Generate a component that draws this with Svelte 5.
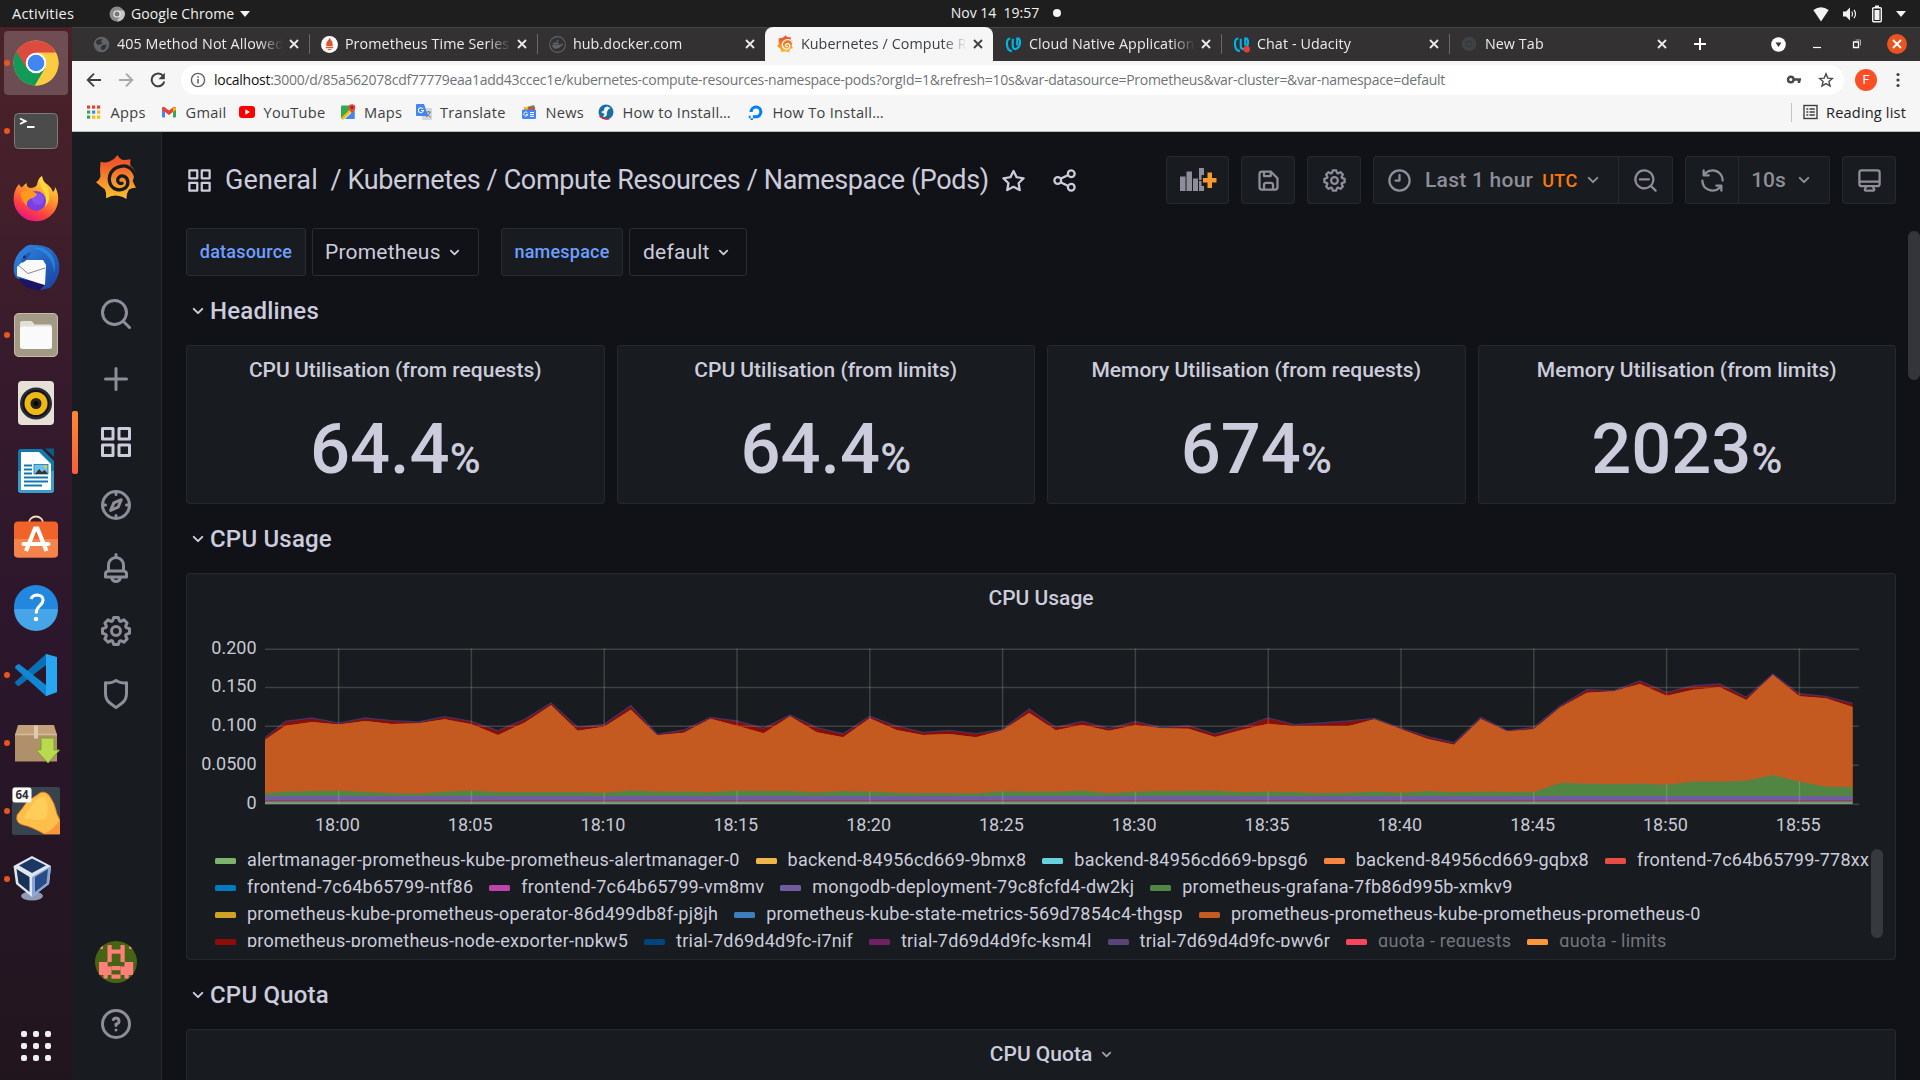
<script>
  const icons = {
    apps: 'M10,13H3a1,1,0,0,0-1,1v7a1,1,0,0,0,1,1h7a1,1,0,0,0,1-1V14A1,1,0,0,0,10,13ZM9,20H4V15H9ZM21,2H14a1,1,0,0,0-1,1v7a1,1,0,0,0,1,1h7a1,1,0,0,0,1-1V3A1,1,0,0,0,21,2ZM20,9H15V4h5Zm1,4H14a1,1,0,0,0-1,1v7a1,1,0,0,0,1,1h7a1,1,0,0,0,1-1V14A1,1,0,0,0,21,13Zm-1,7H15V15h5ZM10,2H3A1,1,0,0,0,2,3v7a1,1,0,0,0,1,1h7a1,1,0,0,0,1-1V3A1,1,0,0,0,10,2ZM9,9H4V4H9Z',
    search: 'M21.71,20.29,18,16.61A9,9,0,1,0,16.61,18l3.68,3.68a1,1,0,0,0,1.42,0A1,1,0,0,0,21.71,20.29ZM11,18a7,7,0,1,1,7-7A7,7,0,0,1,11,18Z',
    zoomOut: 'M21.71,20.29,18,16.61A9,9,0,1,0,16.61,18l3.68,3.68a1,1,0,0,0,1.42,0A1,1,0,0,0,21.71,20.29ZM11,18a7,7,0,1,1,7-7A7,7,0,0,1,11,18ZM15,10H7a1,1,0,0,0,0,2h8a1,1,0,0,0,0-2Z',
    plus: 'M19,11H13V5a1,1,0,0,0-2,0v6H5a1,1,0,0,0,0,2h6v6a1,1,0,0,0,2,0V13h6a1,1,0,0,0,0-2Z',
    compass: 'M12,2A10,10,0,1,0,22,12,10,10,0,0,0,12,2Zm1,17.93V19a1,1,0,0,0-2,0v.93A8,8,0,0,1,4.07,13H5a1,1,0,0,0,0-2H4.07A8,8,0,0,1,11,4.07V5a1,1,0,0,0,2,0V4.07A8,8,0,0,1,19.93,11H19a1,1,0,0,0,0,2h.93A8,8,0,0,1,13,19.93ZM15.14,7.55l-5,2.12a1,1,0,0,0-.52.52l-2.12,5a1,1,0,0,0,.21,1.1,1,1,0,0,0,.7.3.93.93,0,0,0,.4-.09l5-2.12a1,1,0,0,0,.52-.52l2.12-5a1,1,0,0,0-1.31-1.31Zm-2.49,5.1-2.28,1,1-2.28,2.28-1Z',
    bell: 'M18,13.18V10a6,6,0,0,0-5-5.91V3a1,1,0,0,0-2,0V4.09A6,6,0,0,0,6,10v3.18A3,3,0,0,0,4,16v2a1,1,0,0,0,1,1H8.14a4,4,0,0,0,7.72,0H19a1,1,0,0,0,1-1V16A3,3,0,0,0,18,13.18ZM8,10a4,4,0,0,1,8,0v3H8Zm4,10a2,2,0,0,1-1.72-1h3.44A2,2,0,0,1,12,20Zm6-3H6V16a1,1,0,0,1,1-1H17a1,1,0,0,1,1,1Z',
    cog: 'M21.32,9.55l-1.89-.63.89-1.78A1,1,0,0,0,20.13,6L18,3.87a1,1,0,0,0-1.15-.19l-1.78.89-.63-1.89A1,1,0,0,0,13.5,2h-3a1,1,0,0,0-.95.68L8.92,4.57,7.14,3.68A1,1,0,0,0,6,3.87L3.87,6a1,1,0,0,0-.19,1.15l.89,1.78-1.89.63A1,1,0,0,0,2,10.5v3a1,1,0,0,0,.68.95l1.89.63-.89,1.78A1,1,0,0,0,3.87,18L6,20.13a1,1,0,0,0,1.15.19l1.78-.89.63,1.89a1,1,0,0,0,.95.68h3a1,1,0,0,0,.95-.68l.63-1.89,1.78.89A1,1,0,0,0,18,20.13L20.13,18a1,1,0,0,0,.19-1.15l-.89-1.78,1.89-.63A1,1,0,0,0,22,13.5v-3A1,1,0,0,0,21.32,9.55ZM20,12.78l-1.2.4A2,2,0,0,0,17.64,16l.57,1.14-1.1,1.1L16,17.64a2,2,0,0,0-2.79,1.16l-.4,1.2H11.22l-.4-1.2A2,2,0,0,0,8,17.64l-1.14.57-1.1-1.1L6.36,16A2,2,0,0,0,5.2,13.18L4,12.78V11.22l1.2-.4A2,2,0,0,0,6.36,8L5.79,6.89l1.1-1.1L8,6.36A2,2,0,0,0,10.82,5.2l.4-1.2h1.56l.4,1.2A2,2,0,0,0,16,6.36l1.14-.57,1.1,1.1L17.64,8a2,2,0,0,0,1.16,2.79l1.2.4ZM12,8a4,4,0,1,0,4,4A4,4,0,0,0,12,8Zm0,6a2,2,0,1,1,2-2A2,2,0,0,1,12,14Z',
    shield: 'M19.63,3.65a1,1,0,0,0-.84-.2,8,8,0,0,1-6.22-1.27,1,1,0,0,0-1.14,0A8,8,0,0,1,5.21,3.45a1,1,0,0,0-.84.2A1,1,0,0,0,4,4.43v7.45a9,9,0,0,0,3.77,7.33l3.65,2.6a1,1,0,0,0,1.16,0l3.65-2.6A9,9,0,0,0,20,11.88V4.43A1,1,0,0,0,19.63,3.65ZM18,11.88a7,7,0,0,1-2.93,5.7L12,19.77,8.93,17.58A7,7,0,0,1,6,11.88V5.58a10,10,0,0,0,6-1.39,10,10,0,0,0,6,1.39Z',
    star: 'M22,9.67A1,1,0,0,0,21.14,9l-5.69-.83L12.9,3a1,1,0,0,0-1.8,0L8.55,8.16,2.86,9a1,1,0,0,0-.81.68,1,1,0,0,0,.25,1l4.13,4-1,5.68A1,1,0,0,0,6.9,21.44L12,18.77l5.1,2.67a.93.93,0,0,0,.46.12,1,1,0,0,0,.59-.19,1,1,0,0,0,.4-1l-1-5.68,4.13-4A1,1,0,0,0,22,9.67Zm-6.15,4a1,1,0,0,0-.29.88l.72,4.2-3.76-2a1.06,1.06,0,0,0-.94,0l-3.76,2,.72-4.2a1,1,0,0,0-.29-.88l-3-3,4.21-.61a1,1,0,0,0,.76-.55L12,5.7l1.88,3.82a1,1,0,0,0,.76.55l4.21.61Z',
    share: 'M18,14a4,4,0,0,0-3.08,1.48l-5.1-2.35a3.64,3.64,0,0,0,0-2.26l5.1-2.35A4,4,0,1,0,14,6a4.17,4.17,0,0,0,.07.71L8.79,9.14a4,4,0,1,0,0,5.72l5.28,2.43A4.17,4.17,0,0,0,14,18a4,4,0,1,0,4-4ZM18,4a2,2,0,1,1-2,2A2,2,0,0,1,18,4ZM6,14a2,2,0,1,1,2-2A2,2,0,0,1,6,14Zm12,6a2,2,0,1,1,2-2A2,2,0,0,1,18,20Z',
    save: 'M20.71,9.29l-6-6a1,1,0,0,0-.32-.21A1.09,1.09,0,0,0,14,3H6A3,3,0,0,0,3,6V18a3,3,0,0,0,3,3H18a3,3,0,0,0,3-3V10A1,1,0,0,0,20.71,9.29ZM9,5h4V7H9Zm6,14H9V16a1,1,0,0,1,1-1h4a1,1,0,0,1,1,1Zm4-1a1,1,0,0,1-1,1H17V16a3,3,0,0,0-3-3H10a3,3,0,0,0-3,3v3H6a1,1,0,0,1-1-1V6A1,1,0,0,1,6,5H7V8A1,1,0,0,0,8,9h6a1,1,0,0,0,1-1V6.41l4,4Z',
    clock: 'M12,2A10,10,0,1,0,22,12,10,10,0,0,0,12,2Zm0,18a8,8,0,1,1,8-8A8,8,0,0,1,12,20ZM12,6a1,1,0,0,0-1,1v4H8.5a1,1,0,0,0,0,2H12a1,1,0,0,0,1-1V7A1,1,0,0,0,12,6Z',
    sync: 'M19.91,15.51H15.38a1,1,0,0,0,0,2h2.4A8,8,0,0,1,4,12a1,1,0,1,0-2,0,10,10,0,0,0,16.88,7.23V21a1,1,0,0,0,2,0V16.5A1,1,0,0,0,19.91,15.51ZM12,2A10,10,0,0,0,5.12,4.77V3a1,1,0,0,0-2,0V7.5a1,1,0,0,0,1,1h4.5a1,1,0,0,0,0-2H6.22A8,8,0,0,1,20,12a1,1,0,0,0,2,0A10,10,0,0,0,12,2Z',
    monitor: 'M19,2H5A3,3,0,0,0,2,5V15a3,3,0,0,0,3,3H7.64l-.58,1a2,2,0,0,0,0,2,2,2,0,0,0,1.75,1h6.46A2,2,0,0,0,17,21a2,2,0,0,0,0-2l-.59-1H19a3,3,0,0,0,3-3V5A3,3,0,0,0,19,2ZM8.77,20,10,18H14l1.2,2ZM20,15a1,1,0,0,1-1,1H5a1,1,0,0,1-1-1V14H20Zm0-3H4V5A1,1,0,0,1,5,4H19a1,1,0,0,1,1,1Z',
    angle: 'M17,9.17a1,1,0,0,0-1.41,0L12,12.71,8.46,9.17a1,1,0,0,0-1.41,0,1,1,0,0,0,0,1.42l4.24,4.24a1,1,0,0,0,1.42,0L17,10.59A1,1,0,0,0,17,9.17Z',
    question: 'M11.29,15.29a1.58,1.58,0,0,0-.12.15.76.76,0,0,0-.09.18.64.64,0,0,0-.06.18,1.36,1.36,0,0,0,0,.2.84.84,0,0,0,.08.38.9.9,0,0,0,.54.54.94.94,0,0,0,.76,0,.9.9,0,0,0,.54-.54A1,1,0,0,0,13,16a1,1,0,0,0-.29-.71A1,1,0,0,0,11.29,15.29ZM12,2A10,10,0,1,0,22,12,10,10,0,0,0,12,2Zm0,18a8,8,0,1,1,8-8A8,8,0,0,1,12,20ZM12,7A3,3,0,0,0,9.4,8.5a1,1,0,1,0,1.73,1A1,1,0,0,1,12,9a1,1,0,0,1,0,2,1,1,0,0,0-1,1v1a1,1,0,0,0,2,0v-.18A3,3,0,0,0,12,7Z'
  };

  const dock = [
    { id: 'chrome', dot: true, active: true },
    { id: 'terminal', dot: true },
    { id: 'firefox' },
    { id: 'thunderbird' },
    { id: 'files', dot: true },
    { id: 'rhythmbox' },
    { id: 'writer' },
    { id: 'software' },
    { id: 'help' },
    { id: 'vscode', dot: true },
    { id: 'package', dot: true },
    { id: 'honey', dot: true },
    { id: 'vbox', dot: true }
  ];

  const tabs = [
    { title: '405 Method Not Allowed', icon: 'globe' },
    { title: 'Prometheus Time Series C', icon: 'prom', sep: true },
    { title: 'hub.docker.com', icon: 'docker', sep: true },
    { title: 'Kubernetes / Compute Re', icon: 'grafana', active: true },
    { title: 'Cloud Native Application', icon: 'udacity' },
    { title: 'Chat - Udacity', icon: 'udacityDot', sep: true },
    { title: 'New Tab', icon: 'chromeDim', sep: true }
  ];

  const bookmarks = [
    ['appsGrid', 'Apps'],
    ['gmail', 'Gmail'],
    ['youtube', 'YouTube'],
    ['maps', 'Maps'],
    ['translate', 'Translate'],
    ['news', 'News'],
    ['howto', 'How to Install…'],
    ['ocean', 'How To Install…']
  ];

  const nav = ['plus', 'apps', 'compass', 'bell', 'cog', 'shield'];

  const stats = [
    ['CPU Utilisation (from requests)', '64.4'],
    ['CPU Utilisation (from limits)', '64.4'],
    ['Memory Utilisation (from requests)', '674'],
    ['Memory Utilisation (from limits)', '2023']
  ];

  // Chart samples: [minute relative to 18:00, total, without node exporter, grafana layer]
  const samples = [
    [-2.77, 738.7, 740.7, 794], [-2, 722.3, 726.7, 792.6], [-1, 719, 723, 792], [0, 724.2, 725.5, 791.6], [1, 719, 722, 792.8],
    [2, 721.7, 725, 794], [3, 723, 724.3, 794.4], [4, 717.7, 720.3, 792.6], [5, 722.3, 725.3, 791.6], [6, 731.7, 736, 792.8],
    [7, 720.3, 723.7, 793], [8, 704, 706.3, 793], [9, 728.3, 731.7, 793], [10, 725.3, 727.7, 793.4], [11, 706.7, 710.7, 791.6],
    [12, 735.3, 736.3, 792.4], [13, 731, 733.7, 792.4], [14, 718.3, 719.7, 793], [15, 722, 726.7, 791.6], [16, 729.3, 734.3, 792],
    [17, 716, 717.3, 792], [18, 728.7, 733.3, 793.2], [19, 734.7, 738.3, 792], [20, 717.3, 719.3, 792.4], [21, 727, 731, 793.6],
    [22, 733.3, 736, 794], [23, 731.3, 735, 794], [24, 734.7, 738.3, 794.2], [25, 730.3, 731.3, 792], [26, 710, 714, 792.4],
    [27, 728.3, 731.3, 792.4], [28, 722.3, 726, 791.6], [29, 729.7, 731.7, 794], [30, 722.3, 726.3, 792.4], [31, 728.7, 729.3, 791.8],
    [32, 726.7, 729.7, 791.8], [33, 735, 738, 791.6], [34, 728, 731, 793], [35, 719, 724.7, 792.6], [36, 725.7, 727.3, 793],
    [37, 724, 727, 794], [38, 722, 727.3, 793.4], [39, 719.3, 720.3, 792.6], [40, 729, 730.3, 793.4], [41, 737.7, 740, 792],
    [42, 743.7, 745.7, 793], [43, 718.3, 720, 792.6], [44, 731.7, 732.3, 792.8], [45, 728.3, 730.3, 792.8], [46, 706.7, 708.3, 783.8],
    [47, 690.7, 693.7, 784.4], [48, 691.7, 692.3, 785], [49, 682, 685, 784.6], [50, 693.3, 696.7, 785.6], [51, 686.7, 690.7, 782.4],
    [52, 685, 688.3, 782.4], [53, 698.3, 701, 781.4], [54, 675, 675.7, 776], [55, 694.7, 697.3, 782.4], [56, 697.3, 699.3, 787.6],
    [57, 704.3, 708, 788]
  ];
  const X0 = 151.6;
  const STEP = 26.56;
  const TOP = 631;
  const px = (m) => X0 + m * STEP;
  const line = (i) => samples.map((s) => `${px(s[0]).toFixed(1)},${(s[i] - TOP).toFixed(1)}`).join(' ');
  const area = (i) => `${px(-2.77)},173.6 ${line(i)} ${px(57)},173.6`;
  const yTicks = [['0.200', 19], ['0.150', 57.3], ['0.100', 96], ['0.0500', 135], ['0', 174]];
  const xTicks = Array.from({ length: 12 }, (_, i) => [i * 5, `18:${String(i * 5).padStart(2, '0')}`]);

  const legend = [
    [
      ['#7EB26D', 'alertmanager-prometheus-kube-prometheus-alertmanager-0'],
      ['#EEB648', 'backend-84956cd669-9bmx8'],
      ['#66D2E0', 'backend-84956cd669-bpsg6'],
      ['#F88542', 'backend-84956cd669-gqbx8'],
      ['#E84D45', 'frontend-7c64b65799-778xx']
    ],
    [
      ['#007BC2', 'frontend-7c64b65799-ntf86'],
      ['#BF43A9', 'frontend-7c64b65799-vm8mv'],
      ['#705DA0', 'mongodb-deployment-79c8fcfd4-dw2kj'],
      ['#508642', 'prometheus-grafana-7fb86d995b-xmkv9']
    ],
    [
      ['#D0A224', 'prometheus-kube-prometheus-operator-86d499db8f-pj8jh'],
      ['#3D7FBC', 'prometheus-kube-state-metrics-569d7854c4-thgsp'],
      ['#C65A20', 'prometheus-prometheus-kube-prometheus-prometheus-0']
    ],
    [
      ['#8F0D08', 'prometheus-prometheus-node-exporter-npkw5'],
      ['#00447C', 'trial-7d69d4d9fc-j7njf'],
      ['#6F2162', 'trial-7d69d4d9fc-ksm4l'],
      ['#584477', 'trial-7d69d4d9fc-pwv6r'],
      ['#FA455C', 'quota - requests', true],
      ['#FF963A', 'quota - limits', true]
    ]
  ];

  // Blocks of the avatar identicon: [x, y, width, height]
  const avatarRects = [
    [4, 4, 4, 4], [34, 4, 4, 4], [12.5, 4, 4.2, 17], [25.5, 4, 4.2, 17], [16, 8.5, 10, 4.2],
    [4, 21, 8.7, 13], [29.5, 21, 8.7, 13], [12, 25.5, 4.5, 8.5], [25.5, 25.5, 4.5, 8.5],
    [16.5, 25, 9, 4.2], [8.5, 33, 4.2, 4.5], [29.5, 33, 4.2, 4.5], [16.5, 33.5, 9, 4.2]
  ];
</script>

{#snippet icon(name, size)}
  <svg class="ic" width={size} height={size} viewBox="0 0 24 24"><path d={icons[name]} fill="currentColor" /></svg>
{/snippet}

{#snippet cross()}
  <svg class="cross" width="10" height="10" viewBox="0 0 10 10"><path d="M1 1l8 8M9 1l-8 8" stroke="currentColor" stroke-width="1.8" /></svg>
{/snippet}

{#snippet grafanaMark(w, h, hole)}
  <svg class="ic" width={w} height={h} viewBox="0 0 40 44">
    <defs>
      <linearGradient id="gf" x1="0" y1="1" x2="0" y2="0">
        <stop offset="0" stop-color="#fcc22d" /><stop offset=".45" stop-color="#f68b2c" /><stop offset=".8" stop-color="#f15a29" /><stop offset="1" stop-color="#f0512a" />
      </linearGradient>
    </defs>
    <path
      fill="url(#gf)"
      d="M21.5 0Q23 3 26 4.8Q30 5.2 34.6 4.2Q33.8 7.5 34.4 10.5C37.5 13 39.8 16.5 39.9 20.7L38 21.4Q37.6 24 36.6 25.8Q38 29.5 40 32.8Q36.5 32.5 33 34.5Q30.5 38 30.4 44Q27 41.5 23 41Q16.5 39.5 10.2 43.2Q10.8 38 8.8 34.3Q5 31.5 0 27.2Q3.5 25 4.5 21.5Q3.5 14 4.6 6.8Q9 8.5 13.5 6.5Q18.5 4.5 21.5 0Z"
    />
    <path
      d="M39.6 21.8C37.5 13.5 31 9.6 24.6 11.3C15 13 11.7 21.5 14 28.2C16.3 34.5 23.8 36.8 29 33.2C33.3 29.8 32.5 23 28 21.3C24.5 20 20.8 22.8 21.9 26.3C22.6 28.2 24.3 28.9 26 28.2"
      fill="none" stroke={hole} stroke-width="3.3" stroke-linecap="round"
    />
  </svg>
{/snippet}

{#snippet chromeMark(size)}
  <svg class="ic" width={size} height={size} viewBox="0 0 46 46">
    <circle cx="23" cy="23" r="22.5" fill="#fdc93a" />
    <path d="M23 23L3.5 11.8A22.5 22.5 0 0 0 22 45.5L32.5 28Z" fill="#119b57" />
    <path d="M3.5 11.8A22.5 22.5 0 0 1 42.8 12.7H23L13.5 28Z" fill="#dd4b3e" />
    <path d="M23 12.7h20A22.5 22.5 0 0 1 22 45.5L32 28.5Z" fill="#fdcb40" />
    <circle cx="23" cy="23" r="10.3" fill="#fff" /><circle cx="23" cy="23" r="8.3" fill="#4285f4" />
  </svg>
{/snippet}

{#snippet favicon(name)}
  {#if name === 'grafana'}
    {@render grafanaMark(16, 18, '#f6f6f6')}
  {:else if name === 'chromeDim'}
    <svg class="ic" width="16" height="16" viewBox="0 0 16 16"><circle cx="8" cy="8" r="5.2" fill="none" stroke="#3f4346" stroke-width="4" /><circle cx="8" cy="8" r="2.6" fill="#3f4346" /></svg>
  {:else}
    <svg class="ic" width="17" height="17" viewBox="0 0 16 16">
      {#if name === 'globe'}
        <circle cx="8" cy="8" r="7.3" fill="#5f6368" />
        <path d="M3 4.5Q6 2 9 3L7.5 5.5L9 7L5 8.5L3 7ZM9 8.5L13 8L11.5 12L8.5 13.5L7 11Z" fill="#333132" />
      {:else if name === 'prom'}
        <circle cx="8" cy="8" r="8" fill="#fff" />
        <path d="M8 1.5C9 4 11.5 5 11 9.3H5C4.5 5 7 5 8 1.5ZM4.5 10.2h7v1.3h-7ZM6 12.3h4Q8 14.5 6 12.3Z" fill="#e6522c" />
      {:else if name === 'docker'}
        <circle cx="8" cy="8" r="7.4" fill="none" stroke="#5f6368" stroke-width="1" />
        <path d="M3 8h8.5Q12 6.5 13.5 7.3Q13 9 11.5 9.2Q10 12 6.5 12Q3 12 3 8ZM4 6h5v1.5h-5ZM7 4h2v1.5h-2Z" fill="#5f6368" />
      {:else}
        <path d="M5 2.3Q1.8 2.3 1.8 7Q1.8 13.8 6.5 14.2M7.3 2.5V10Q7.5 12.5 10 12.3Q14 11 14.2 6Q14.3 2 11.5 2.3V9" fill="none" stroke="#02b3e4" stroke-width="2" />
        {#if name === 'udacityDot'}<circle cx="13" cy="12.5" r="3" fill="#e0403a" />{/if}
      {/if}
    </svg>
  {/if}
{/snippet}

{#snippet bookmarkIcon(name)}
  <svg class="ic" width="16" height="16" viewBox="0 0 16 16">
    {#if name === 'appsGrid'}
      {#each [['#ea4335', '#ea4335', '#ea4335'], ['#34a853', '#4285f4', '#fbbc05'], ['#34a853', '#fbbc05', '#fbbc05']] as row, r}
        {#each row as c, k}<rect x={1 + k * 5} y={1.5 + r * 5} width="3.2" height="3.2" fill={c} />{/each}
      {/each}
    {:else if name === 'gmail'}
      <path d="M1 3.5h3v10H2q-1 0-1-1Z" fill="#4285f4" /><path d="M12 3.5h3v9q0 1-1 1h-2Z" fill="#34a853" />
      <path d="M1 3.5l2-.8L8 6.5l5-3.8l2 .8v2.3L8 11L1 5.8Z" fill="#ea4335" /><path d="M12 3.5l3 0v2.3l-3 2.2Z" fill="#fbbc04" />
    {:else if name === 'youtube'}
      <rect x="0" y="2" width="16" height="12" rx="3" fill="#f00" /><path d="M6.3 5.3v5.4L11 8Z" fill="#fff" />
    {:else if name === 'maps'}
      <rect x="1" y="1.5" width="13.5" height="13.5" rx="1" fill="#34a853" /><path d="M1 15L14 2v12q0 1-1 1Z" fill="#e8eaed" /><path d="M5 15L14.5 6v9Z" fill="#4285f4" /><path d="M2 15L13 4" stroke="#fbbc04" stroke-width="2.5" />
      <path d="M12 10C11.5 7 8.7 6.5 8.7 3.5A3.3 3.3 0 0 1 15.3 3.5C15.3 6.5 12.5 7 12 10Z" fill="#ea4335" /><circle cx="12" cy="3.5" r="1.2" fill="#8c1d13" />
    {:else if name === 'translate'}
      <rect x="6" y="4" width="10" height="12" rx="1" fill="#d4d7db" /><path d="M0 1q0-1 1-1h7l4 12H1q-1 0-1-1Z" fill="#4285f4" />
      <path d="M7 4.8A2.5 2.5 0 1 0 7.4 6.5H5" fill="none" stroke="#fff" stroke-width="1.1" /><path d="M10 8h5M12.5 7v1M14 8q-1 4-4 5M11 9.5q1 2.5 4 4" fill="none" stroke="#607d8b" stroke-width=".9" />
    {:else if name === 'news'}
      <path d="M2 4l11-3l1 4Z" fill="#34a853" /><path d="M3 3h10v4H3Z" fill="#fbbc04" /><path d="M7 3l7 0v3H7Z" fill="#ea4335" /><rect x="1" y="5.5" width="14" height="9.5" rx="1.2" fill="#4285f4" />
      <path d="M6.5 8.8A2 2 0 1 0 6.8 10.5H5M9 8.5h4M9 10.4h4M9 12.3h4" fill="none" stroke="#fff" stroke-width="1" />
    {:else if name === 'howto'}
      <circle cx="8" cy="8" r="7.5" fill="#1b6f9f" /><path d="M9.5 2.5Q5.5 3 6 6.5L3 8L6.5 10L5 13Q8 13.5 9 10.5Q8 6.5 12.5 4Z" fill="#eef4f7" /><path d="M1.5 12.2Q6 16 11 14.8" stroke="#d22" stroke-width="1.3" fill="none" />
    {:else}
      <path d="M8 14.3V11.2A3.3 3.3 0 1 0 4.7 8H1.6A6.4 6.4 0 1 1 8 14.3Z" fill="#0080ff" /><path d="M4.9 11.2H8v3.1H4.9ZM2.6 14.3h2.3v1.7H2.6ZM.8 11.8h1.8v2.5H.8Z" fill="#0080ff" />
    {/if}
  </svg>
{/snippet}

{#snippet dockIcon(id)}
  {#if id === 'chrome'}
    {@render chromeMark(46)}
  {:else}
    <svg class="ic" width="48" height="48" viewBox="0 0 48 48">
      {#if id === 'terminal'}
        <rect x="2.5" y="6.5" width="43" height="35" rx="4" fill="#4b4b4b" stroke="#7b7b7b" />
        <path d="M8 11.5l5.5 2.7L8 17" fill="none" stroke="#fff" stroke-width="1.9" /><path d="M15 20h7.5" stroke="#fff" stroke-width="2" />
      {:else if id === 'firefox'}
        <defs>
          <linearGradient id="ff" x1=".8" y1="0" x2=".3" y2="1"><stop offset="0" stop-color="#fff04a" /><stop offset=".4" stop-color="#ff9a2a" /><stop offset=".75" stop-color="#ff3f42" /><stop offset="1" stop-color="#e3128b" /></linearGradient>
        </defs>
        <path d="M7 9Q8 12 10 12.5Q12 9 15 8Q14 12 18 13Q23 13 25 10Q26 3 30 1Q30 6 36 10Q40 13 41 17Q44 14 42.5 11Q47 18 46 27A22.3 22.3 0 0 1 1.7 26Q1 16 7 9Z" fill="url(#ff)" />
        <circle cx="24" cy="26" r="10" fill="#7a3fe0" /><circle cx="26" cy="24" r="6" fill="#9059f5" opacity=".7" />
        <path d="M9 17Q18 13 25 19Q24 22 18 24Q14 26 15 31Q8 25 9 17Z" fill="#ff9a1f" />
        <path d="M30 1Q26 8 31 16Q36 22 33 32Q40 25 36 14Q31 8 30 1Z" fill="#ffd83a" />
      {:else if id === 'thunderbird'}
        <defs><linearGradient id="tb" x1="0" y1="0" x2="1" y2="1"><stop offset="0" stop-color="#2f8be6" /><stop offset="1" stop-color="#1a3f9c" /></linearGradient></defs>
        <path d="M2 30Q0 14 12 5Q16 1 22 2Q40 1 46 16Q51 32 38 45L28 47L34 40L6 36Q3 34 2 30Z" fill="url(#tb)" />
        <path d="M7 35Q12 47 27 47L33 42Z" fill="#1b1464" />
        <path d="M5 24L12 17L31 17L34 22L33 42L26 40L5 33Z" fill="#fafafa" /><path d="M6 22L16 30.500L33 25" fill="none" stroke="#888" stroke-width="1" />
        <path d="M9 18Q12 10 19 9Q18 16 10 20Z" fill="#1d5fb0" /><circle cx="12.5" cy="14" r="1.5" fill="#1a237e" />
        <path d="M20 5Q40 8 42 30Q45 18 38 10Q30 3 20 5Z" fill="#31a3ea" opacity=".5" />
      {:else if id === 'files'}
        <rect x="2" y="2" width="44" height="44" rx="5" fill="#a39a86" /><rect x="2.5" y="2.5" width="43" height="43" rx="4.5" fill="none" stroke="#c3bbab" />
        <path d="M8 12q0-2 2-2h9q1 0 2 1.5l1.5 2H38q2 0 2 2V20H8Z" fill="#e3e0d8" /><rect x="8" y="15.5" width="32" height="22.5" rx="2.5" fill="#fafafa" />
      {:else if id === 'rhythmbox'}
        <rect x="6" y="2" width="36" height="44" rx="4" fill="#e5e1d6" /><circle cx="24" cy="24.5" r="16" fill="#2b2b38" /><circle cx="24" cy="24.5" r="13.5" fill="#11131f" /><circle cx="24" cy="24.5" r="11.5" fill="#efb914" />
        <circle cx="24" cy="24.5" r="5.5" fill="#222" /><circle cx="24" cy="24.5" r="2.2" fill="#000" />
      {:else if id === 'writer'}
        <path d="M6 5q0-3 3-3H30L42 14V43q0 3-3 3H9q-3 0-3-3Z" fill="#1279ad" /><path d="M6 24H42V43q0 3-3 3H9q-3 0-3-3Z" fill="#3a9dcd" /><path d="M9 6q0-1 1-1H27L39 17V42q0 1-1 1H10q-1 0-1-1Z" fill="#fff" /><path d="M33 1.5h9V10Z" fill="#0d5c85" />
        <path d="M12 18.5h8M12 22.5h8M12 26.5h8M12 30.5h24M12 34.5h24M12 38.5h18" stroke="#1279ad" stroke-width="2" /><rect x="22" y="17.5" width="14" height="9.5" fill="#6fc3ea" stroke="#1279ad" stroke-width=".8" /><path d="M23 27l4-5l3 3l2.5-2l3.5 4Z" fill="#333" /><circle cx="33.5" cy="19.8" r="1.6" fill="#fbc02d" />
      {:else if id === 'software'}
        <path d="M17 8A7 6.5 0 0 1 31 8" fill="none" stroke="#f6ddb8" stroke-width="1.8" />
        <rect x="2" y="6.5" width="44" height="36" rx="4" fill="#f0642a" /><path d="M2 24H46V38.5q0 4-4 4H6q-4 0-4-4Z" fill="#f5834c" />
        <path d="M14 36L23 13.5h2.5L34.5 36" fill="none" stroke="#fff" stroke-width="4.2" /><path d="M11.5 29h25" stroke="#fff" stroke-width="4" stroke-linecap="round" />
      {:else if id === 'help'}
        <circle cx="24" cy="24" r="22" fill="#2287de" /><path d="M2 26A22 22 0 0 0 46 26Z" fill="#45a5e8" />
        <path d="M19 16Q20.5 12 25.5 12Q31 12.5 31 17Q31 20 27.5 23Q24.2 26 24.2 30.5" fill="none" stroke="#fff" stroke-width="3" /><circle cx="24" cy="36" r="2.3" fill="#fff" />
      {:else if id === 'vscode'}
        <path d="M34 3L45 6V41L34 45Z" fill="#23a9f2" /><path d="M34 3L3 31Q3 34 7 35L34 14Z" fill="#0a70b4" /><path d="M34 45L3 17Q3 14 7 13L34 34Z" fill="#1187d4" /><path d="M34 3v42l11-4V7Z" fill="#29a6f2" />
      {:else if id === 'package'}
        <path d="M6 6H42L45 16H3Z" fill="#c3a27a" /><rect x="3" y="15" width="42" height="27.5" fill="#b0906a" /><path d="M3 15.5h42" stroke="#d6bd9b" stroke-width="1.5" /><rect x="22" y="6.5" width="4" height="13" fill="#dfcaab" />
        <path d="M29 19h13v12h5.5L36 44L24 31h5Z" fill="#b9d94e" stroke="#7fa32e" />
      {:else if id === 'honey'}
        <rect x="0" y="0" width="48" height="48" rx="2" fill="#3a424d" />
        <path d="M25 8Q31 2 37 8Q43 16 45 27L48 33V47H32Q20 40 11 38Q3 36 5 28Q10 22 14 16Q18 12 25 8Z" fill="#fcc04a" stroke="#d9701d" stroke-width=".8" /><path d="M48 33V47H32Q42 42 48 33Z" fill="#fb963a" /><path d="M18 21Q24 10 33 9Q38 22 34 32Q22 34 12 31Z" fill="#ffd766" opacity=".6" />
        <rect x=".5" y=".5" width="19" height="15" rx="2.5" fill="#fff" /><text x="10" y="12.2" text-anchor="middle" font-family="Open Sans, sans-serif" font-size="11.5" font-weight="700" fill="#333">64</text>
      {:else}
        <ellipse cx="20" cy="41" rx="11" ry="4.5" fill="#8d9bb8" /><path d="M20 1L39 11L37 29L20 42L4 29L1.5 11Z" fill="#dfe5f0" /><path d="M20 22L39 11L37 29L20 42Z" fill="#8aa6d8" />
        <path d="M20 3.5L34 10.5L20 18L7 10.5Z" fill="#1b3763" /><path d="M4.5 14L17.5 22V37L6.5 28Z" fill="#173157" /><path d="M36 14L23 22V37L34.5 28Z" fill="#284d84" />
      {/if}
    </svg>
  {/if}
{/snippet}

<div class="desktop">
  <header class="topbar">
    <div class="left"><span class="act">Activities</span>
      <svg class="ic" width="16" height="16" viewBox="0 0 16 16"><circle cx="8" cy="8" r="7.5" fill="#8b8b8b" /><path d="M8 4.5h7A7.5 7.5 0 0 1 8 15.5L11 10Z" fill="#c5c5c5" /><circle cx="8" cy="8" r="3.6" fill="#eee" /><circle cx="8" cy="8" r="2.5" fill="#777" /></svg>
      <span class="app">Google Chrome</span><i class="tri"></i></div>
    <div class="clock"><span>Nov 14&nbsp; 19:57</span><i class="notice"></i></div>
    <div class="tray">
      <svg width="16" height="16" viewBox="0 0 16 16"><path d="M.3 4Q8-1.5 15.7 4L8 15.5Z" fill="#f2f2f2" /></svg>
      <svg width="16" height="16" viewBox="0 0 16 16"><path d="M1 5.5h3L8 1.5v13L4 10.5H1Z" fill="#f2f2f2" /><path d="M9.8 5.5q1.6 2.5 0 5M12 3.8q3 4.2 0 8.4" fill="none" stroke="#f2f2f2" stroke-width="1.2" /></svg>
      <svg width="12" height="18" viewBox="0 0 12 18"><path d="M4 .5h4v2H4Z" fill="#f2f2f2" /><rect x="1.7" y="2.7" width="8.6" height="14" rx="1" fill="none" stroke="#f2f2f2" stroke-width="1.4" /><rect x="3.5" y="5" width="5" height="10" fill="#f2f2f2" /></svg>
      <i class="tri"></i>
    </div>
  </header>

  <div class="body">
    <aside class="dock">
      {#each dock as d}
        <div class="slot" class:active={d.active}>
          {#if d.dot}<i class="dot"></i>{/if}
          {@render dockIcon(d.id)}
        </div>
      {/each}
      <div class="grid9">{#each Array(9) as _}<i></i>{/each}</div>
    </aside>

    <div class="browser">
      <div class="tabstrip">
        {#each tabs as t}
          <div class="tab" class:on={t.active} class:sep={t.sep}>
            <span class="fav">{@render favicon(t.icon)}</span><span class="ttl">{t.title}</span>{@render cross()}
          </div>
        {/each}
        <div class="strip-end">
          <svg width="14" height="14" viewBox="0 0 14 14"><path d="M7 1v12M1 7h12" stroke="#fff" stroke-width="2" /></svg>
          <svg class="down" width="15" height="15" viewBox="0 0 15 15"><circle cx="7.5" cy="7.5" r="7.3" fill="#fff" /><path d="M4.5 5.5h6L7.5 10Z" fill="#333" /></svg>
          <svg class="min" width="10" height="14" viewBox="0 0 10 14"><path d="M1 10.5h8" stroke="#fff" stroke-width="1.2" /></svg>
          <svg class="max" width="10" height="10" viewBox="0 0 10 10"><path d="M1.5 3h5v5.5h-5Z" fill="none" stroke="#fff" stroke-width="1.3" /><path d="M3.5 1h5v5.5" fill="none" stroke="#aaa" stroke-width="1" /></svg>
          <span class="close">{@render cross()}</span>
        </div>
      </div>

      <div class="navbar">
        <svg width="16" height="16" viewBox="0 0 16 16"><path d="M15 8H2M8 1.7L1.7 8L8 14.3" fill="none" stroke="#3c4043" stroke-width="1.9" /></svg>
        <svg width="16" height="16" viewBox="0 0 16 16"><path d="M1 8h13M8 1.7L14.3 8L8 14.3" fill="none" stroke="#a5a7a9" stroke-width="1.9" /></svg>
        <svg width="16" height="16" viewBox="0 0 16 16"><path d="M13.2 4A6.4 6.4 0 1 0 14.3 9.5" fill="none" stroke="#3c4043" stroke-width="2" /><path d="M14.8 .8v6.4H8.4Z" fill="#3c4043" /></svg>
        <div class="omni">
          <svg class="info" width="16" height="16" viewBox="0 0 16 16"><circle cx="8" cy="8" r="6.6" fill="none" stroke="#5f6368" stroke-width="1.4" /><path d="M8 7v4.5M8 4.2v1.6" stroke="#5f6368" stroke-width="1.6" /></svg>
          <span class="url"><b>localhost</b>:3000/d/85a562078cdf77779eaa1add43ccec1e/kubernetes-compute-resources-namespace-pods?orgId=1&amp;refresh=10s&amp;var-datasource=Prometheus&amp;var-cluster=&amp;var-namespace=default</span>
          <svg class="key" width="16" height="16" viewBox="0 0 16 16"><circle cx="4.8" cy="7.5" r="2.8" fill="none" stroke="#45494d" stroke-width="2.4" /><path d="M8 7.5h7M13 8v3" stroke="#45494d" stroke-width="2.6" /></svg>
          <svg class="fav-star" width="16" height="16" viewBox="0 0 16 16"><path d="M8 1.8l1.8 4.3l4.6.4l-3.5 3l1.1 4.6L8 11.6L4 14.1l1.1-4.6l-3.5-3l4.6-.4Z" fill="none" stroke="#45494d" stroke-width="1.4" /></svg>
        </div>
        <span class="profile">F</span>
        <svg class="kebab" width="4" height="16" viewBox="0 0 4 16"><circle cx="2" cy="2.5" r="1.6" fill="#3c4043" /><circle cx="2" cy="8" r="1.6" fill="#3c4043" /><circle cx="2" cy="13.5" r="1.6" fill="#3c4043" /></svg>
      </div>

      <div class="bookmarks">
        {#each bookmarks as [ico, label]}
          <span class="bm">{@render bookmarkIcon(ico)}<span>{label}</span></span>
        {/each}
        <span class="reading">
          <svg width="15" height="16" viewBox="0 0 15 16"><rect x="1" y="1.5" width="13" height="13" fill="none" stroke="#3c4043" stroke-width="1.4" /><path d="M3.3 5h2M6.5 5h5.3M3.3 8h2M6.5 8h5.3M3.3 11h2M6.5 11h5.3" stroke="#3c4043" stroke-width="1.4" /></svg>
          <span>Reading list</span>
        </span>
      </div>

      <div class="grafana">
        <nav class="side">
          <i class="active-bar"></i>
          <div class="logo">{@render grafanaMark(40, 44, '#181b1f')}</div>
          <div class="search">{@render icon('search', 36)}</div>
          {#each nav as n}<div class="navi" class:cur={n === 'apps'}>{@render icon(n, 36)}</div>{/each}
          <svg class="avatar" width="42" height="42" viewBox="0 0 42 42">
            <defs><clipPath id="av"><circle cx="21" cy="21" r="21" /></clipPath></defs>
            <g clip-path="url(#av)">
              <rect width="42" height="42" fill="#476414" />
              {#each avatarRects as [x, y, w, h]}<rect {x} {y} width={w} height={h} fill="#ff8078" />{/each}
            </g>
          </svg>
          <div class="navi help">{@render icon('question', 36)}</div>
        </nav>

        <main>
          <div class="toolbar">
            <span class="crumb-icon">{@render icon('apps', 27)}</span>
            <span class="crumb">General</span><span class="crumb path">/ Kubernetes / Compute Resources / Namespace (Pods)</span>
            <span class="t-star">{@render icon('star', 27)}</span>
            <span class="t-share">{@render icon('share', 27)}</span>
            <div class="actions">
              <div class="btn add">
                <svg width="38" height="26" viewBox="0 0 38 26"><path d="M1 9.5h5.5V24H1ZM7.5 4.5h5.5V24H7.5ZM14 11.5h5V24H14ZM20 1h5v7h-2.5v5H20ZM20 14h2.5v5H25v5h-5Z" fill="#8e8e9a" /><path d="M28.5 5.5h4.5v5.5h4.5v4.5h-4.5V21h-4.5v-5.5H24V11h4.5Z" fill="#fa9a2c" /></svg>
              </div>
              <div class="btn">{@render icon('save', 27)}</div>
              <div class="btn">{@render icon('cog', 27)}</div>
              <div class="group">
                <div class="btn time">{@render icon('clock', 27)}<span class="range">Last 1 hour</span><span class="utc">UTC</span>{@render icon('angle', 24)}</div>
                <div class="btn">{@render icon('zoomOut', 27)}</div>
              </div>
              <div class="group">
                <div class="btn">{@render icon('sync', 27)}</div>
                <div class="btn rate"><span>10s</span>{@render icon('angle', 24)}</div>
              </div>
              <div class="btn">{@render icon('monitor', 27)}</div>
            </div>
          </div>

          <div class="vars">
            <span class="vlabel ds">datasource</span><span class="vval ds">Prometheus {@render icon('angle', 21)}</span>
            <span class="vlabel ns">namespace</span><span class="vval df">default {@render icon('angle', 21)}</span>
          </div>

          <h2 class="row">{@render icon('angle', 24)}<span>Headlines</span></h2>
          <div class="stats">
            {#each stats as [title, value]}
              <section class="panel stat"><h3>{title}</h3><p><span class="num">{value}</span><span class="pct">%</span></p></section>
            {/each}
          </div>

          <h2 class="row">{@render icon('angle', 24)}<span>CPU Usage</span></h2>
          <section class="panel usage">
            <h3>CPU Usage</h3>
            <svg class="chart" width="1708" height="212" viewBox="0 0 1708 212">
              <polygon points={area(1)} fill="#890f02" />
              <polygon points={area(2)} fill="#c55a20" />
              <polygon points={area(3)} fill="#508642" />
              <polyline points={line(1)} fill="none" stroke="#443166" stroke-width="1.3" />
              <polyline points={line(3)} fill="none" stroke="#6b7a55" stroke-width="1" />
              <g transform="translate({px(-2.77)} 0)">
                <rect y="166" width="1587.500" height="5" fill="#705da0" />
                <rect y="170" width="1587.500" height="1.200" fill="#65508a" />
                <rect y="171.200" width="1587.500" height="1.100" fill="#b0554f" />
                <rect y="172.300" width="1587.500" height="1.500" fill="#79a581" />
              </g>
              <g stroke="#c8c8b0" stroke-opacity=".22" stroke-width="1.5">
                {#each yTicks as [, y]}<line x1="78" x2="1672" y1={y + 0.25} y2={y + 0.25} />{/each}
                {#each xTicks as [m]}<line x1={px(m)} x2={px(m)} y1="18.5" y2="174" />{/each}
              </g>
              <!-- The large layer is repeated above the grid so the lines show only outside it -->
              <polygon points="{line(2)} {samples.slice().reverse().map((s) => `${px(s[0]).toFixed(1)},${(s[3] - TOP).toFixed(1)}`).join(' ')}" fill="#c55a20" />
              {#each yTicks as [label, y]}<text x="69.5" y={y + 5.1} text-anchor="end">{label}</text>{/each}
              {#each xTicks as [m, label]}<text x={px(m) - 1.200} y="201.3" text-anchor="middle">{label}</text>{/each}
            </svg>
            <div class="legend">
              {#each legend as row}
                <div class="lrow">
                  {#each row as [color, label, dim]}
                    <span class="item" class:muted={dim}><i style="background:{color}"></i>{label}</span>
                  {/each}
                </div>
              {/each}
              <b class="lscroll"></b>
            </div>
          </section>

          <h2 class="row">{@render icon('angle', 24)}<span>CPU Quota</span></h2>
          <section class="panel quota"><h3>CPU Quota {@render icon('angle', 21)}</h3></section>
        </main>
        <b class="pscroll"></b>
      </div>
    </div>
  </div>
</div>

<style>
  :global(body) { margin: 0; overflow: hidden; background: #111217; }
  .desktop { width: 1920px; height: 1080px; display: flex; flex-direction: column; overflow: hidden; font-family: "Open Sans", "Noto Sans", sans-serif; font-size: 14px; }
  .desktop :global(svg) { display: block; flex: none; }
  .ic { display: block; flex: none; }

  .topbar { height: 27px; flex: none; background: #1e1e1e; color: #f0f0f0; display: grid; grid-template-columns: 1fr auto 1fr; align-items: center; line-height: 26px; }
  .left { display: flex; align-items: center; padding-left: 12px; }
  .act { width: 97px; font-size: 14.6px; line-height: 24px; letter-spacing: .2px; margin-top: -1px; }
  .app { margin-left: 6px; width: 105px; letter-spacing: .1px; }
  .tri { border: 5px solid transparent; border-top: 6px solid #f2f2f2; border-bottom: 0; margin-left: 4px; }
  .clock { display: flex; align-items: center; gap: 14px; padding-left: 112px; padding-right: 20px; line-height: 24px; padding-bottom: 1px; }
  .notice { width: 8px; height: 8px; border-radius: 50%; background: #f2f2f2; }
  .tray { display: flex; align-items: center; justify-content: flex-end; gap: 13px; padding-right: 14px; }
  .tray .tri { margin-left: 0; }

  .body { flex: 1; display: flex; min-height: 0; }
  .dock { width: 72px; flex: none; background: linear-gradient(#4b2128 0, #45202a 12%, #351a2c 35%, #2c162b 58%, #261626 75%, #21151d 100%); display: flex; flex-direction: column; padding-top: 2px; box-sizing: border-box; }
  .slot { height: 68px; display: flex; align-items: center; justify-content: center; position: relative; flex: none; }
  .slot.active { height: 64px; margin: 2px 4px; background: rgba(255, 255, 255, .2); border-radius: 4px; }
  .dot { position: absolute; left: 4px; top: 31px; width: 6px; height: 6px; border-radius: 50%; background: #e95420; }
  .slot.active .dot { left: 0; top: 29px; }
  .grid9 { margin: auto auto 19px 21px; display: grid; grid-template-columns: repeat(3, 6px); gap: 6px; }
  .grid9 i { width: 6px; height: 6px; border-radius: 2px; background: #f0eff0; }

  .browser { flex: 1; min-width: 0; display: flex; flex-direction: column; }
  .tabstrip { height: 34px; flex: none; background: linear-gradient(#474546 0 1px, #333132 1px); display: flex; padding-left: 9px; color: #ececec; }
  .tab { width: 228px; box-sizing: border-box; height: 34px; flex: none; display: flex; align-items: center; padding: 0 10px 0 12px; position: relative; }
  .tab.sep::before { content: ""; position: absolute; left: 0; top: 7px; width: 1px; height: 20px; background: #6a6869; }
  .tab.on { background: #f6f6f6; color: #3c4043; border-radius: 8px 8px 0 0; }
  .fav { width: 24px; margin-left: -.5px; margin-right: .5px; }
  .ttl { width: 166px; overflow: hidden; white-space: nowrap; line-height: 20px; font-size: 14.3px; letter-spacing: .1px; -webkit-mask-image: linear-gradient(90deg, #000 142px, transparent 166px); mask-image: linear-gradient(90deg, #000 142px, transparent 166px); margin-right: 7px; }
  .strip-end { display: flex; align-items: center; flex: 1; padding-left: 16px; }
  .down { margin-left: 64px; }
  .min { margin-left: 26px; }
  .max { margin-left: 30px; }
  .close { width: 20px; height: 20px; border-radius: 50%; background: #e95420; margin-left: 25px; display: grid; place-items: center; color: #fff; }

  .navbar { height: 38px; flex: none; background: #f6f6f6; display: flex; align-items: center; padding-left: 14px; gap: 16px; }
  .omni { width: 1663px; height: 30px; box-sizing: border-box; border-radius: 15px; background: #fff; display: flex; align-items: center; padding-left: 9px; margin-left: -1px; }
  .url { margin-left: 8px; width: 1232px; color: #6f7377; white-space: nowrap; line-height: 20px; letter-spacing: -.28px; font-size: 14px; margin-right: 340px; }
  .url b { font-weight: 400; color: #111; }
  .fav-star { margin-left: 16px; }
  .profile { width: 22px; height: 22px; border-radius: 50%; background: #fc4f26; color: #fff; display: grid; place-items: center; font: 13px/22px Roboto, sans-serif; margin-left: -5px; }
  .kebab { margin-left: 3px; }

  .bookmarks { height: 33px; box-sizing: border-box; flex: none; background: #f6f6f6; border-bottom: 1px solid #b9bfc0; display: grid; grid-template-columns: 75px 78px 100.5px 76px 105.5px 77px 150px 1fr auto; align-items: center; padding: 0 14px 6px; color: #3c4043; }
  .bm, .reading { display: flex; align-items: center; gap: 8.5px; white-space: nowrap; line-height: 20px; font-size: 14.6px; letter-spacing: .27px; }
  .bm span, .reading span { margin-top: -1px; }
  .reading { border-left: 1px solid #c4c6c8; padding-left: 11px; color: #222; letter-spacing: .15px; }

  .grafana { flex: 1; min-height: 0; display: flex; font-family: Roboto, sans-serif; color: #ccccdc; position: relative; background: #111217; }
  .side { width: 90px; box-sizing: border-box; flex: none; background: #181b1f; border-right: 1px solid #26292e; color: #8e8e9a; display: flex; flex-direction: column; position: relative; }
  .logo { margin: 23px 0 0 24px; height: 44px; }
  .search { margin: 97px 0 0 26px; height: 36px; }
  .navi { margin: 0 0 27px 26px; height: 36px; }
  .search + .navi { margin-top: 29px; }
  .navi.cur { color: #ccccdc; }
  .active-bar { position: absolute; left: 0; top: 279px; width: 6px; height: 63px; border-radius: 2px; background: linear-gradient(#ff8833, #f55f3e); }
  .avatar { margin: auto 0 23px 23px; }
  .navi.help { margin-bottom: 38px; }

  main { flex: 1; min-width: 0; padding: 24px 24px 0; display: flex; flex-direction: column; }
  .toolbar { height: 48px; display: flex; align-items: center; flex: none; }
  .crumb { font-size: 27px; line-height: 36px; white-space: nowrap; margin-left: 12px; letter-spacing: .15px; }
  .crumb.path { margin-left: 12.5px; letter-spacing: -.37px; }
  .t-star { margin-left: 11px; }
  .t-share { margin-left: 24px; }
  .actions { margin-left: auto; display: flex; gap: 12px; color: #8e8e9a; }
  .btn { height: 48px; width: 54px; box-sizing: border-box; border: 1px solid #25282d; background: #181b1f; border-radius: 3px; display: flex; align-items: center; justify-content: center; font-size: 21px; font-weight: 500; white-space: nowrap; }
  .btn.add { width: 63px; }
  .group { display: flex; }
  .group .btn:first-child { border-radius: 3px 0 0 3px; }
  .group .btn:last-child { border-radius: 0 3px 3px 0; border-left: 0; }
  .group .btn.time { width: 246px; justify-content: flex-start; padding-left: 12px; }
  .btn.time .range { margin-left: 12px; letter-spacing: .25px; }
  .utc { color: #ff780a; font-size: 18px; margin: 0 4px 0 9px; letter-spacing: .3px; }
  .btn.rate { width: 91px; gap: 6px; padding-right: 1px; }

  .vars { display: flex; height: 48px; margin-top: 24px; flex: none; }
  .vars span { box-sizing: border-box; height: 48px; border: 1px solid #2a2c32; border-radius: 3px; display: flex; align-items: center; white-space: nowrap; }
  .vars .vlabel { color: #6e9fff; background: #181b1f; font-size: 18px; font-weight: 500; justify-content: center; letter-spacing: .22px; padding-bottom: 1px; }
  .vval { background: #111217; font-size: 21px; padding-left: 12px; gap: 3px; letter-spacing: .2px; }
  .vlabel.ds { width: 120px; }
  .vval.ds { width: 167px; margin-left: 6px; }
  .vlabel.ns { width: 122px; margin-left: 22px; }
  .vval.df { width: 118px; margin-left: 6px; padding-left: 13px; }

  .row { margin: 21px 0 0; height: 28px; font-size: 24px; font-weight: 500; line-height: 28px; display: flex; align-items: center; flex: none; letter-spacing: .2px; }
  .panel { background: #181b1f; border: 1px solid #25282d; border-radius: 3px; box-sizing: border-box; flex: none; }
  h3 { margin: 0; font-size: 21px; font-weight: 500; line-height: 30px; text-align: center; letter-spacing: 0; }
  .stats { display: grid; grid-template-columns: repeat(4, 1fr); gap: 12px; margin-top: 20px; }
  .stat { height: 159px; padding-top: 9px; }
  .stat p { margin: 24px 0 0; text-align: center; line-height: 80px; font-weight: 500; white-space: nowrap; }
  .num { font-size: 70.5px; }
  .pct { font-size: 42px; }
  .usage { height: 387px; margin-top: 20px; padding-top: 9px; overflow: hidden; }
  .chart { margin-top: 17px; font-size: 18px; }
  .chart text { fill: #c7c8d4; }
  .legend { position: relative; height: 101px; margin-left: 28px; margin-top: 4px; overflow: hidden; }
  .lrow { display: flex; height: 27px; gap: 16px; }
  .item { display: flex; align-items: center; font-size: 18px; line-height: 27px; white-space: nowrap; letter-spacing: .224px; }
  .item i { width: 21px; height: 6px; border-radius: 1.5px; margin-right: 11px; margin-top: 2px; }
  .muted { color: #74757f; }
  .lscroll { position: absolute; right: 12px; top: 3px; width: 12px; height: 89px; border-radius: 6px; background: #37393e; }
  .quota { height: 80px; margin-top: 20px; padding-top: 9px; }
  .quota h3 { display: flex; justify-content: center; align-items: center; gap: 4px; padding-left: 25px; }
  .quota .ic { color: #9fa0ab; }
  .pscroll { position: absolute; right: 0; top: 99px; width: 12px; height: 149px; border-radius: 6px; background: #34353b; }
</style>
